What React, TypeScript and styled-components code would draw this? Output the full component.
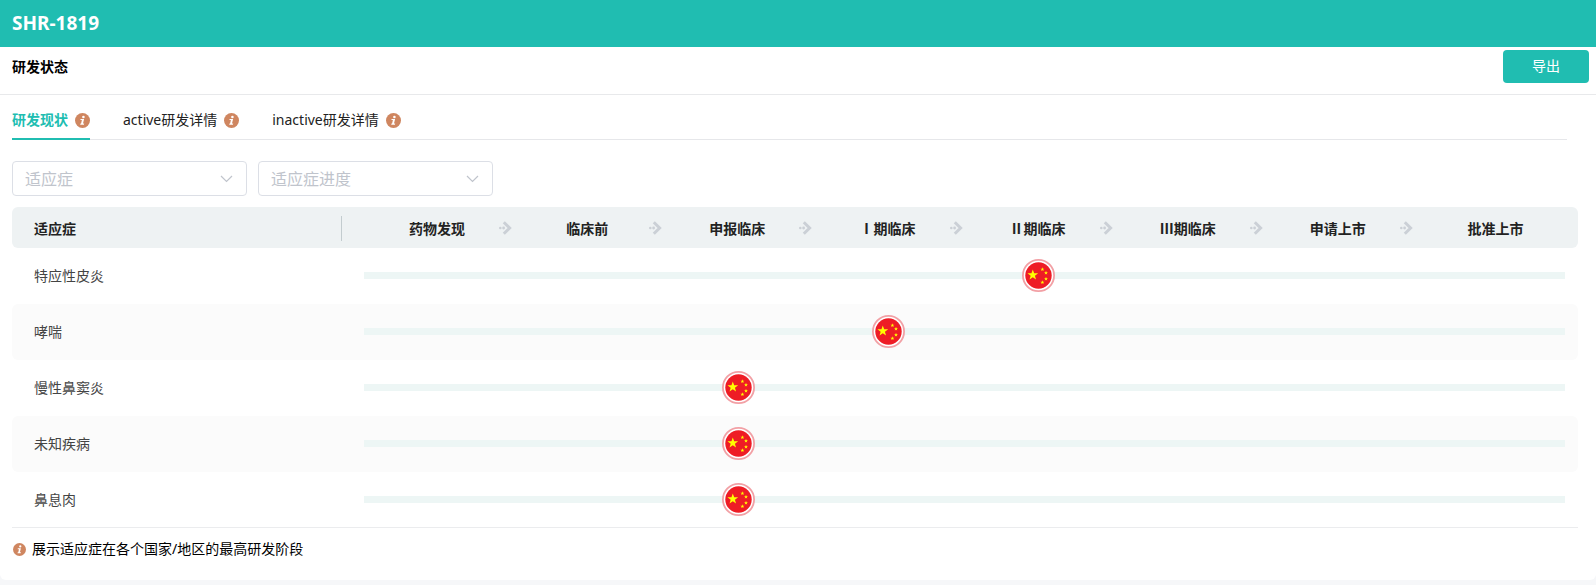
import React, { useState } from "react";
import styled, { createGlobalStyle } from "styled-components";

const teal = "#20bdb1";

const GlobalStyle = createGlobalStyle`
  * { box-sizing: border-box; }
  body {
    margin: 0;
    background: #f6f7f9;
    color: #000;
    font: 14px/20px "Noto Sans", "Noto Sans CJK SC", sans-serif;
  }
  button, select { font-family: inherit; }
`;

const Panel = styled.main`
  background: #fff;
  border-radius: 0 0 6px 6px;
  padding-bottom: 20px;
`;

const TitleBar = styled.header`
  display: flex;
  align-items: center;
  height: 47px;
  padding: 0 12px 2px;
  background: ${teal};
`;

const Title = styled.h1`
  margin: 0;
  color: #fff;
  font-size: 19px;
  font-weight: 700;
  line-height: 24px;
`;

const StatusBar = styled.div`
  display: flex;
  align-items: flex-start;
  justify-content: space-between;
  height: 48px;
  padding: 3px 7px 0 12px;
  border-bottom: 1px solid #e8e9eb;
`;

const StatusTitle = styled.h2`
  margin: 0;
  font-size: 14px;
  font-weight: 700;
  line-height: 33px;
`;

const ExportButton = styled.button`
  width: 86px;
  height: 33px;
  padding: 0 0 2px;
  border: 0;
  border-radius: 4px;
  background: ${teal};
  color: #fff;
  font-size: 14px;
  line-height: 20px;
`;

const Tabs = styled.div`
  display: flex;
  gap: 33px;
  height: 45px;
  margin: 0 29px 0 12px;
  box-shadow: inset 0 -1px #e6e7ea;
`;

const Tab = styled.button<{ $active: boolean }>`
  display: flex;
  align-items: center;
  gap: 7px;
  padding: 8px 0 0;
  border: 0;
  border-bottom: 2px solid ${(p) => (p.$active ? teal : "transparent")};
  background: none;
  color: ${(p) => (p.$active ? teal : "#222")};
  font-size: 14px;
  font-weight: ${(p) => (p.$active ? 700 : 400)};
  line-height: 20px;
`;

const TabLabel = styled.span`
  padding-bottom: 1px;
`;

const Filters = styled.div`
  display: flex;
  gap: 11px;
  padding: 21px 12px 11px;
`;

const SelectBox = styled.label`
  display: grid;
  align-items: center;
  width: 235px;
`;

const Select = styled.select`
  grid-area: 1 / 1;
  width: 100%;
  height: 35px;
  padding: 0 32px 0 12px;
  appearance: none;
  border: 1px solid #dcdfe6;
  border-radius: 4px;
  background: #fff;
  color: #c0c4cc;
  font-size: 16px;
`;

const Chevron = styled.svg`
  grid-area: 1 / 1;
  justify-self: end;
  margin-right: 14px;
  pointer-events: none;
`;

const Table = styled.table`
  display: block;
  margin: 0 18px 0 12px;
  border-bottom: 1px solid #ebecee;

  thead, tbody { display: block; }
  tr {
    display: grid;
    grid-template-columns: 352px repeat(8, 1fr);
    padding-right: 13px;
    border-radius: 6px;
  }
`;

const HeadRow = styled.tr`
  height: 41px;
  background: #eef2f3;
`;

const NameHead = styled.th`
  display: flex;
  align-items: center;
  justify-content: space-between;
  margin-right: 22px;
  padding: 2px 0 0 22px;
  color: #222;

  &::after {
    content: "";
    width: 1px;
    height: 25px;
    background: #c3cccf;
  }
`;

const StageHead = styled.th`
  display: flex;
  align-items: center;
  padding: 0 0 0 11px;
  color: #222;
`;

const StageName = styled.span`
  flex: 1;
  padding-top: 2px;
  text-align: center;
`;

const Arrow = styled.svg`
  margin-right: 2px;
`;

const Row = styled.tr`
  height: 56px;
  padding-bottom: 1px;

  &:nth-child(even) { background: #fbfbfb; }
  &:last-child { height: 55px; padding-bottom: 0; }
`;

const RowName = styled.th`
  padding: 0 0 0 22px;
  color: #444;
  font-weight: 400;
  line-height: 55px;
  text-align: left;
`;

const StageCell = styled.td`
  display: grid;
  place-items: center;
  padding: 0;

  &::before {
    content: "";
    grid-area: 1 / 1;
    width: 100%;
    height: 7px;
    background: #edf6f5;
  }
`;

const Flag = styled.svg`
  grid-area: 1 / 1;
  z-index: 1;
  margin-right: 2px;
`;

const Note = styled.p`
  display: flex;
  align-items: center;
  gap: 6px;
  margin: 0;
  padding: 11px 13px 1px;
`;

function InfoIcon({ size = 15 }: { size?: number }) {
  return (
    <svg width={size} height={size} viewBox="0 0 15 15" aria-hidden="true">
      <circle cx="7.5" cy="7.5" r="7.5" fill="#cf8660" />
      <circle cx="8.4" cy="4" r="1.3" fill="#fff" />
      <path d="M5.6 6H9.1L8 10.6H9.2L8.9 11.8H5.2L5.5 10.6H6.1L6.9 7.1H5.4Z" fill="#fff" />
    </svg>
  );
}

function NextArrow() {
  return (
    <Arrow width="13" height="14" viewBox="0 0 13 14" aria-hidden="true">
      <path d="M4.8 1.3 10.6 7 4.8 12.7" fill="none" stroke="#cbd0d6" strokeWidth="3" />
      <circle cx="1.3" cy="7" r="1.3" fill="#cbd0d6" />
      <circle cx="4.6" cy="7" r="1.4" fill="#cbd0d6" />
    </Arrow>
  );
}

const STAR = "M0-5 1.2-1.6 4.8-1.5 1.9.6 2.9 4 0 2-2.9 4-1.9.6-4.8-1.5-1.2-1.6Z";

function ChinaFlag() {
  return (
    <Flag width="33" height="33" viewBox="0 0 33 33" role="img" aria-label="中国">
      <circle cx="16.5" cy="16.5" r="15.6" fill="#fff" stroke="#f2a0a5" strokeWidth="1.8" />
      <circle cx="16.5" cy="16.5" r="13.2" fill="#ee1c25" />
      <path d={STAR} fill="#ff0" transform="translate(10.8 16) scale(1.12)" />
      {[[20.4, 10.3], [24, 13.8], [24, 19.8], [20.4, 23.4]].map(([x, y]) => (
        <path key={y} d={STAR} fill="#ff0" transform={`translate(${x} ${y}) scale(.42)`} />
      ))}
    </Flag>
  );
}

const tabs = ["研发现状", "active研发详情", "inactive研发详情"];
const filters = ["适应症", "适应症进度"];
const stages = ["药物发现", "临床前", "申报临床", "Ⅰ期临床", "Ⅱ期临床", "Ⅲ期临床", "申请上市", "批准上市"];
const indications = [
  { name: "特应性皮炎", stage: 4 },
  { name: "哮喘", stage: 3 },
  { name: "慢性鼻窦炎", stage: 2 },
  { name: "未知疾病", stage: 2 },
  { name: "鼻息肉", stage: 2 },
];

export default function App() {
  const [active, setActive] = useState(0);
  return (
    <>
      <GlobalStyle />
      <Panel>
        <TitleBar>
          <Title>SHR-1819</Title>
        </TitleBar>
        <StatusBar>
          <StatusTitle>研发状态</StatusTitle>
          <ExportButton type="button">导出</ExportButton>
        </StatusBar>
        <Tabs role="tablist">
          {tabs.map((label, i) => (
            <Tab key={label} type="button" role="tab" aria-selected={i === active} $active={i === active} onClick={() => setActive(i)}>
              <TabLabel>{label}</TabLabel>
              <InfoIcon />
            </Tab>
          ))}
        </Tabs>
        <Filters>
          {filters.map((label) => (
            <SelectBox key={label}>
              <Select aria-label={label}>
                <option>{label}</option>
              </Select>
              <Chevron width="13" height="8" viewBox="0 0 13 8" aria-hidden="true">
                <path d="M1 1 6.5 6.5 12 1" fill="none" stroke="#c0c4cc" strokeWidth="1.2" />
              </Chevron>
            </SelectBox>
          ))}
        </Filters>
        <Table>
          <thead>
            <HeadRow>
              <NameHead scope="col">适应症</NameHead>
              {stages.map((stage, i) => (
                <StageHead key={stage} scope="col">
                  <StageName>{stage}</StageName>
                  {i < stages.length - 1 && <NextArrow />}
                </StageHead>
              ))}
            </HeadRow>
          </thead>
          <tbody>
            {indications.map((item) => (
              <Row key={item.name}>
                <RowName scope="row">{item.name}</RowName>
                {stages.map((stage, i) => (
                  <StageCell key={stage}>{i === item.stage && <ChinaFlag />}</StageCell>
                ))}
              </Row>
            ))}
          </tbody>
        </Table>
        <Note>
          <InfoIcon size={13} />
          展示适应症在各个国家/地区的最高研发阶段
        </Note>
      </Panel>
    </>
  );
}
